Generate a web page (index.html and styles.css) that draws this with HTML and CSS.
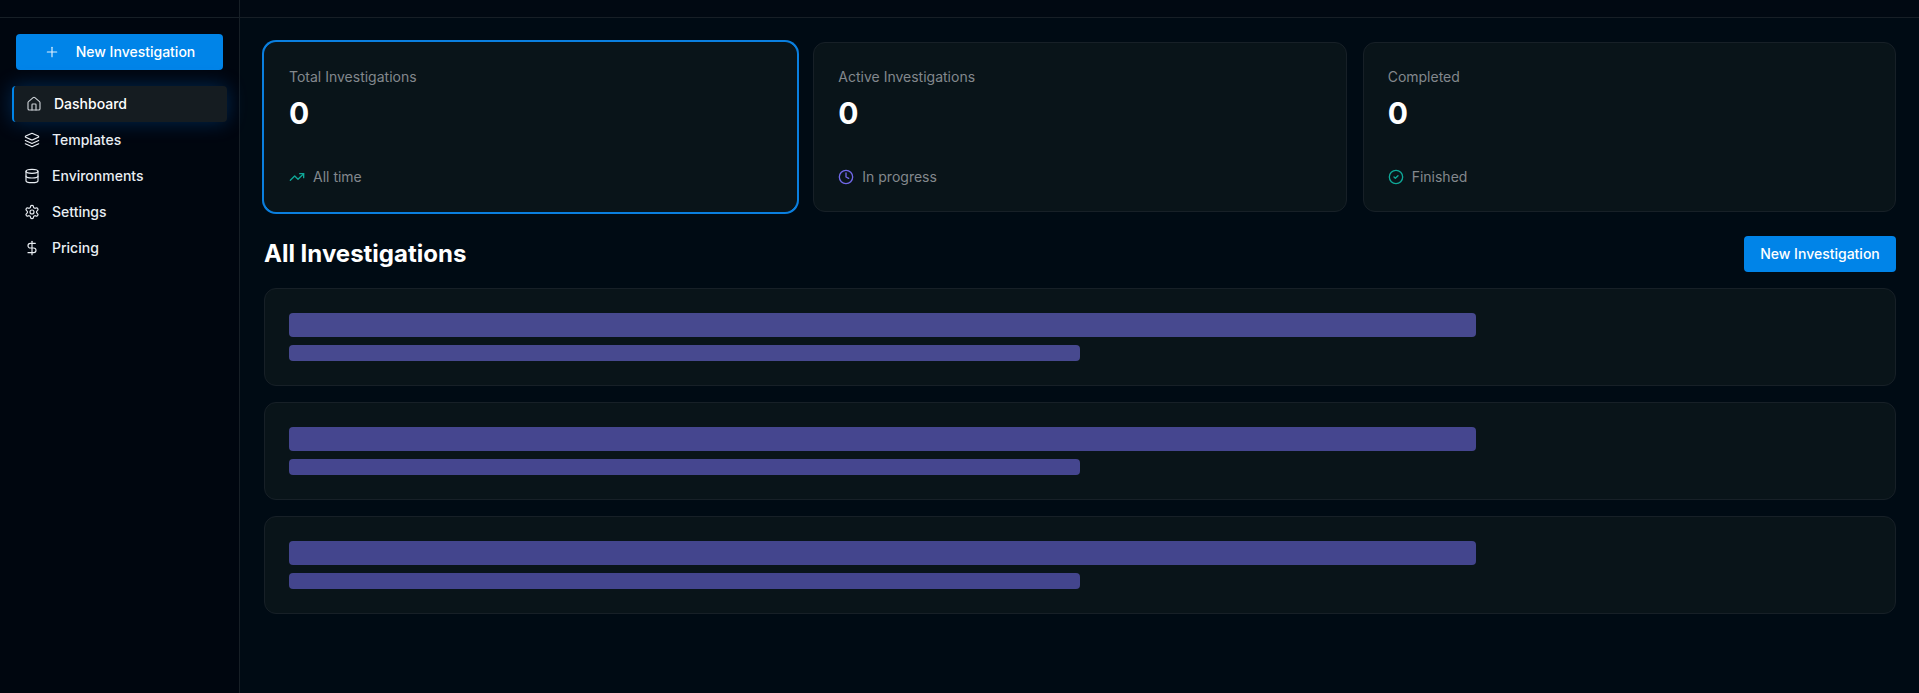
FILE: index.html
```html
<!DOCTYPE html>
<html lang="en">
<head>
<meta charset="utf-8">
<title>Dashboard</title>
<link rel="stylesheet" href="styles.css">
</head>
<body>
<div class="app">
  <aside class="sidebar">
    <div class="side-top"></div>
    <div class="side-body">
      <button class="btn btn-side">
        <svg class="icon" viewBox="0 0 24 24"><path d="M5 12h14"/><path d="M12 5v14"/></svg>
        <span>New Investigation</span>
      </button>
      <nav class="nav">
        <a class="nav-item active">
          <svg class="icon" viewBox="0 0 24 24"><path d="M15 21v-8a1 1 0 0 0-1-1h-4a1 1 0 0 0-1 1v8"/><path d="M3 10a2 2 0 0 1 .709-1.528l7-5.999a2 2 0 0 1 2.582 0l7 5.999A2 2 0 0 1 21 10v9a2 2 0 0 1-2 2H5a2 2 0 0 1-2-2z"/></svg>
          <span>Dashboard</span>
        </a>
        <a class="nav-item">
          <svg class="icon" viewBox="0 0 24 24"><path d="m12.83 2.18a2 2 0 0 0-1.66 0L2.6 6.08a1 1 0 0 0 0 1.83l8.58 3.91a2 2 0 0 0 1.66 0l8.58-3.9a1 1 0 0 0 0-1.83Z"/><path d="m22 17.65-9.17 4.16a2 2 0 0 1-1.66 0L2 17.65"/><path d="m22 12.65-9.17 4.16a2 2 0 0 1-1.66 0L2 12.65"/></svg>
          <span>Templates</span>
        </a>
        <a class="nav-item">
          <svg class="icon" viewBox="0 0 24 24"><ellipse cx="12" cy="5" rx="9" ry="3"/><path d="M3 5v14a9 3 0 0 0 18 0V5"/><path d="M3 12a9 3 0 0 0 18 0"/></svg>
          <span>Environments</span>
        </a>
        <a class="nav-item">
          <svg class="icon" viewBox="0 0 24 24"><path d="M12.22 2h-.44a2 2 0 0 0-2 2v.18a2 2 0 0 1-1 1.73l-.43.25a2 2 0 0 1-2 0l-.15-.08a2 2 0 0 0-2.73.73l-.22.38a2 2 0 0 0 .73 2.73l.15.1a2 2 0 0 1 1 1.72v.51a2 2 0 0 1-1 1.74l-.15.09a2 2 0 0 0-.73 2.73l.22.38a2 2 0 0 0 2.73.73l.15-.08a2 2 0 0 1 2 0l.43.25a2 2 0 0 1 1 1.73V20a2 2 0 0 0 2 2h.44a2 2 0 0 0 2-2v-.18a2 2 0 0 1 1-1.73l.43-.25a2 2 0 0 1 2 0l.15.08a2 2 0 0 0 2.73-.73l.22-.39a2 2 0 0 0-.73-2.73l-.15-.08a2 2 0 0 1-1-1.74v-.5a2 2 0 0 1 1-1.74l.15-.09a2 2 0 0 0 .73-2.73l-.22-.38a2 2 0 0 0-2.73-.73l-.15.08a2 2 0 0 1-2 0l-.43-.25a2 2 0 0 1-1-1.73V4a2 2 0 0 0-2-2z"/><circle cx="12" cy="12" r="3"/></svg>
          <span>Settings</span>
        </a>
        <a class="nav-item">
          <svg class="icon" viewBox="0 0 24 24"><line x1="12" x2="12" y1="2" y2="22"/><path d="M17 5H9.5a3.5 3.5 0 0 0 0 7h5a3.5 3.5 0 0 1 0 7H6"/></svg>
          <span>Pricing</span>
        </a>
      </nav>
    </div>
  </aside>
  <div class="content">
    <header class="topbar"></header>
    <main class="main">
      <section class="stats">
        <article class="card stat stat-focus">
          <div class="stat-label">Total Investigations</div>
          <div class="stat-value">0</div>
          <div class="stat-foot">
            <svg class="icon teal" viewBox="0 0 24 24"><path d="M22 7 13.5 15.5 8.5 10.5 2 17"/><path d="M16 7h6v6"/></svg>
            <span>All time</span>
          </div>
        </article>
        <article class="card stat">
          <div class="stat-label">Active Investigations</div>
          <div class="stat-value">0</div>
          <div class="stat-foot">
            <svg class="icon purple" viewBox="0 0 24 24"><circle cx="12" cy="12" r="10"/><path d="M12 6v6l4 2"/></svg>
            <span>In progress</span>
          </div>
        </article>
        <article class="card stat">
          <div class="stat-label">Completed</div>
          <div class="stat-value">0</div>
          <div class="stat-foot">
            <svg class="icon teal" viewBox="0 0 24 24"><circle cx="12" cy="12" r="10"/><path d="m9 12 2 2 4-4"/></svg>
            <span>Finished</span>
          </div>
        </article>
      </section>
      <section class="head-row">
        <h1 class="title">All Investigations</h1>
        <button class="btn btn-head">New Investigation</button>
      </section>
      <section class="list">
        <div class="card skeleton"><div class="bar bar-lg"></div><div class="bar bar-sm"></div></div>
        <div class="card skeleton shade-2"><div class="bar bar-lg"></div><div class="bar bar-sm"></div></div>
        <div class="card skeleton shade-3"><div class="bar bar-lg"></div><div class="bar bar-sm"></div></div>
      </section>
    </main>
  </div>
</div>
</body>
</html>
```
FILE: styles.css
```css
* { box-sizing: border-box; }
html, body { margin: 0; height: 100%; overflow: hidden; }
body {
  background: #000b14;
  color: #fff;
  font-family: Inter, "Liberation Sans", sans-serif;
  font-size: 14px;
  line-height: 20px;
}
.app { display: flex; height: 693px; }
.sidebar {
  flex: 0 0 240px;
  border-right: 1px solid #171f26;
  background: #00060f;
}
.side-top { height: 18px; border-bottom: 1px solid #171f26; }
.side-body { padding: 16px 12px; display: flex; flex-direction: column; gap: 16px; }
.icon {
  width: 16px;
  height: 16px;
  flex: none;
  fill: none;
  stroke: currentColor;
  stroke-width: 2;
  stroke-linecap: round;
  stroke-linejoin: round;
}
.btn {
  border: 0;
  border-radius: 4px;
  background: #0084e8;
  color: #fff;
  font: 500 14px/20px Inter, "Liberation Sans", sans-serif;
  height: 36px;
}
.btn-side {
  margin: 0 4px;
  display: flex;
  align-items: center;
  justify-content: center;
  gap: 16px;
}
.btn-side .icon { color: #e0f0fd; stroke-width: 1.75; }
.nav { display: flex; flex-direction: column; }
.nav-item {
  display: flex;
  align-items: center;
  gap: 12px;
  height: 36px;
  padding: 0 12px;
  border-radius: 4px;
  color: #e9eef3;
  font-weight: 500;
}
.nav-item .icon { stroke-width: 1.75; }
.nav-item.active {
  background: #151c21;
  border-left: 2px solid #0084e8;
  box-shadow: 0 0 20px rgba(0, 120, 240, 0.3);
  color: #fff;
}
.nav-item.active .icon { color: #c9ced3; }
.content { flex: 1; min-width: 0; display: flex; flex-direction: column; }
.topbar { height: 18px; flex: none; border-bottom: 1px solid #171f26; background: #010912; }
.main { padding: 24px 23px 24px 24px; }
.stats { display: grid; grid-template-columns: repeat(3, 1fr); gap: 16px; }
.card {
  background: #091419;
  border: 1px solid #172027;
  border-radius: 12px;
}
.stat { padding: 24px; height: 170px; }
.stat-focus { border-color: #091419; box-shadow: 0 0 0 2px #0a7fdf; }
.stat-label { color: #83888d; }
.stat-value { margin-top: 8px; font-size: 30px; line-height: 36px; font-weight: 700; }
.stat-foot { margin-top: 36px; display: flex; align-items: center; gap: 8px; color: #83888d; }
.teal { color: #0fa898; }
.purple { color: #7168e8; }
.head-row {
  margin: 24px 0 16px;
  display: flex;
  align-items: center;
  justify-content: space-between;
}
.title { margin: 0; font-size: 24px; line-height: 32px; font-weight: 700; color: #fff; }
.btn-head { width: 152px; }
.list { display: flex; flex-direction: column; gap: 16px; }
.skeleton { padding: 24px; }
.bar { background: #47498f; border-radius: 4px; }
.shade-2 .bar { background: #45468f; }
.shade-3 .bar { background: #43458d; }
.bar-lg { width: 75%; height: 24px; }
.bar-sm { width: 50%; height: 16px; margin-top: 8px; }
```
